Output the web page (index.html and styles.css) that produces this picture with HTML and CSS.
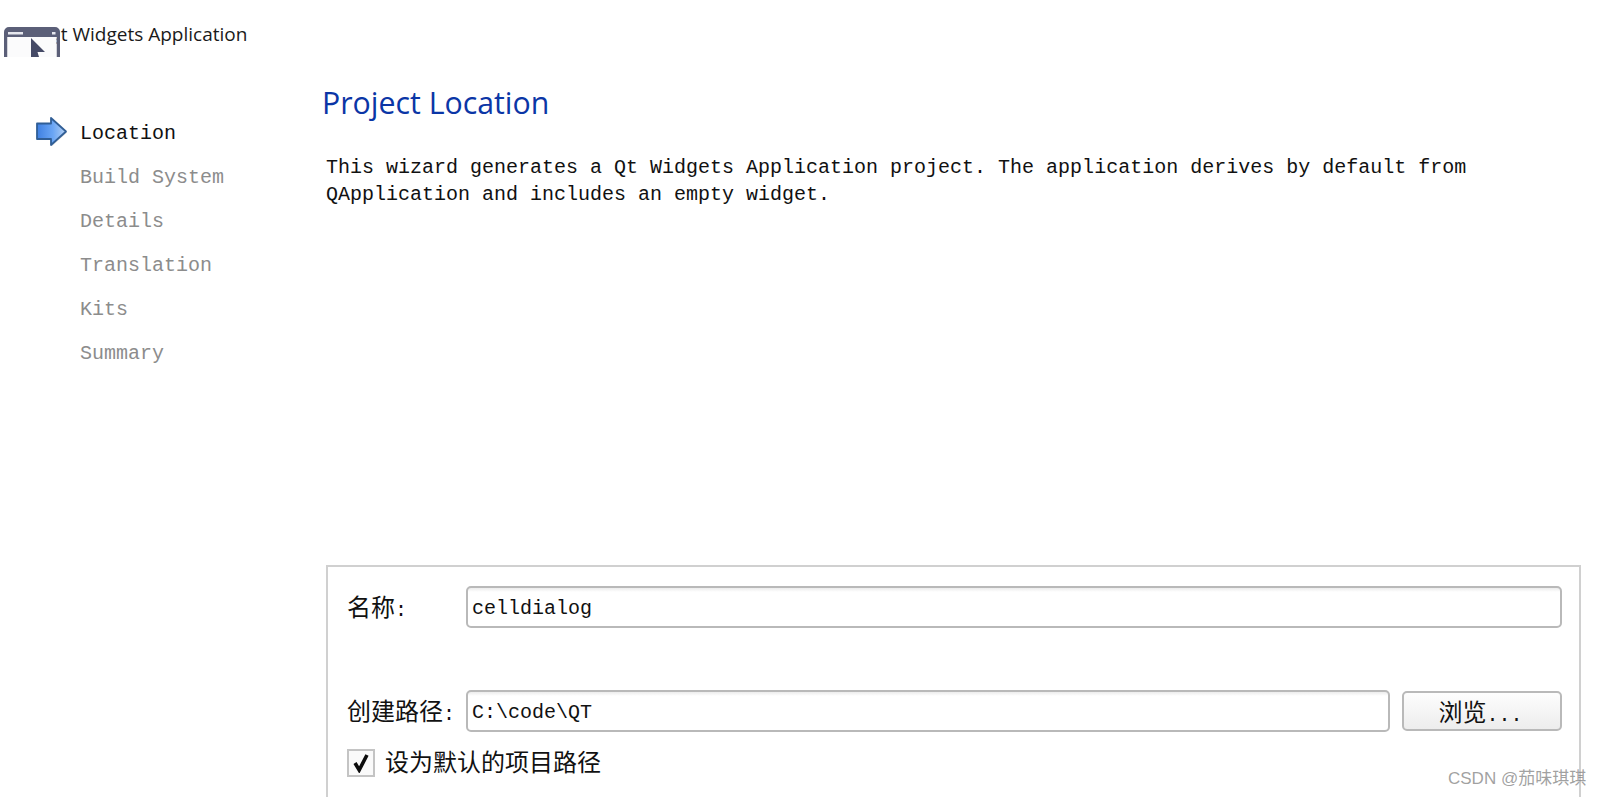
FILE: index.html
```html
<!DOCTYPE html>
<html lang="en">
<head>
<meta charset="utf-8">
<title>Qt Widgets Application</title>
<link rel="stylesheet" href="styles.css">
</head>
<body>
<div class="page">
  <header class="titlebar">
    <span class="app-title">Qt Widgets Application</span>
    <svg class="app-icon" width="56" height="30" viewBox="0 0 56 30">
      <path d="M0 30V5a5 5 0 0 1 5-5h46a5 5 0 0 1 5 5v25h-3.500V10H3.500v20z" fill="#5b5f78"/>
      <rect x="4" y="5" width="15" height="2.500" fill="#e6e7ee"/>
      <rect x="48" y="5" width="3.500" height="2.500" fill="#e6e7ee"/>
      <rect x="3.500" y="10" width="49" height="20" fill="#fbfbfc"/>
      <path d="M27 11V30h8l-1.500-5H41z" fill="#454a66"/>
    </svg>
  </header>
  <div class="wizard">
    <nav class="steps">
      <div class="step current">
        <svg class="arrow" width="32" height="30" viewBox="0 0 32 30">
          <defs>
            <linearGradient id="arrowFill" x1="0" y1="0" x2="1" y2="0">
              <stop offset="0" stop-color="#3f80e2"/>
              <stop offset="0.55" stop-color="#6ba6f5"/>
              <stop offset="1" stop-color="#b4d0f2"/>
            </linearGradient>
          </defs>
          <path d="M2 9h14V3l15 12.500L16 29v-6H2z" fill="#aaa" opacity=".45"/>
          <path d="M1 6.500h14V1l15 13.500L15 28v-6H1z" fill="url(#arrowFill)" stroke="#305e96" stroke-width="1.800" stroke-linejoin="round"/>
        </svg>
        <span>Location</span>
      </div>
      <div class="step">Build System</div>
      <div class="step">Details</div>
      <div class="step">Translation</div>
      <div class="step">Kits</div>
      <div class="step">Summary</div>
    </nav>
    <main class="content">
      <h1 class="heading">Project Location</h1>
      <p class="intro">This wizard generates a Qt Widgets Application project. The application derives by default from<br>QApplication and includes an empty widget.</p>
      <section class="form">
        <div class="row row-name">
          <label class="field-label">名称<span class="half">:</span></label>
          <div class="input">celldialog</div>
        </div>
        <div class="row row-path">
          <label class="field-label">创建路径<span class="half">:</span></label>
          <div class="input">C:\code\QT</div>
          <button class="browse" type="button">浏览<span class="half">...</span></button>
        </div>
        <div class="check-row">
          <span class="checkbox">
            <svg width="20" height="20" viewBox="0 0 20 20"><path d="M4 10l4.200 7L16 2" fill="none" stroke="#0c0c0c" stroke-width="3.600"/></svg>
          </span>
          <span class="check-label">设为默认的项目路径</span>
        </div>
      </section>
    </main>
  </div>
  <div class="watermark">CSDN @茄味琪琪</div>
</div>
</body>
</html>
```
FILE: styles.css
```css
* { box-sizing: border-box; }
html, body { margin: 0; padding: 0; background: #fff; }
.page {
  position: relative;
  width: 1600px;
  height: 797px;
  overflow: hidden;
  color: #111;
  font-family: "Liberation Mono", "Noto Sans CJK SC", monospace;
  font-size: 20px;
}
.titlebar {
  height: 57px;
  padding: 21px 0 0 46px;
  position: relative;
}
.app-title {
  font-family: "Open Sans", "Noto Sans", sans-serif;
  font-size: 19px;
  line-height: 26px;
  display: block;
  color: #1a1a1a;
}
.app-icon { position: absolute; left: 4px; top: 27px; }
.wizard { display: flex; }
.steps { width: 326px; padding: 55px 0 0 36px; }
.step {
  height: 44px;
  line-height: 44px;
  padding-left: 44px;
  color: #8c8c8c;
}
.step.current {
  color: #111;
  padding-left: 0;
  display: flex;
  align-items: center;
  gap: 12px;
}
.arrow { flex: none; margin-bottom: 4px; }
.content { flex: 1; padding-right: 19px; }
.heading {
  margin: 24px 0 0 -4px;
  font-family: "Open Sans", "Noto Sans", sans-serif;
  font-weight: 400;
  font-size: 30.3px;
  line-height: 44px;
  color: #0b36a6;
}
.intro {
  margin: 29px 0 0;
  line-height: 27px;
  white-space: nowrap;
}
.form {
  margin-top: 357px;
  height: 260px;
  border: 2px solid #d0d0d0;
  padding: 19px 17px 0 19px;
}
.row { display: flex; align-items: center; }
.row-path { margin-top: 62px; }
.field-label {
  width: 119px;
  flex: none;
  padding-bottom: 4px;
  font-family: "Noto Sans CJK SC", sans-serif;
  font-size: 24px;
}
.half {
  font-family: "Liberation Mono", monospace;
  font-size: 20px;
}
.input {
  flex: 1;
  height: 42px;
  line-height: 41px;
  padding-left: 4px;
  border: 2px solid #b9b9b9;
  border-radius: 5px;
  background: linear-gradient(#ececec 0, #fff 4px);
  font-size: 20px;
}
.browse {
  flex: none;
  width: 160px;
  height: 40px;
  margin-left: 12px;
  border: 2px solid #b9b9b9;
  border-radius: 5px;
  background: linear-gradient(#fdfdfd, #ededed);
  color: #111;
  font-family: "Noto Sans CJK SC", sans-serif;
  font-size: 24px;
  padding: 0 3px 4px 0;
}
.check-row { display: flex; align-items: center; margin-top: 17px; }
.checkbox {
  width: 28px;
  height: 28px;
  flex: none;
  border: 2px solid #c4c4c4;
  background: #fafafa;
  display: flex;
  align-items: center;
  justify-content: center;
}
.check-label {
  margin-left: 10px;
  padding-bottom: 4px;
  font-family: "Noto Sans CJK SC", sans-serif;
  font-size: 24px;
  line-height: 24px;
}
.watermark {
  position: absolute;
  left: 1448px;
  top: 768px;
  font-family: "Liberation Sans", "Noto Sans CJK SC", sans-serif;
  font-size: 17px;
  line-height: 22px;
  color: rgba(130, 130, 130, 0.75);
  white-space: nowrap;
}
```
